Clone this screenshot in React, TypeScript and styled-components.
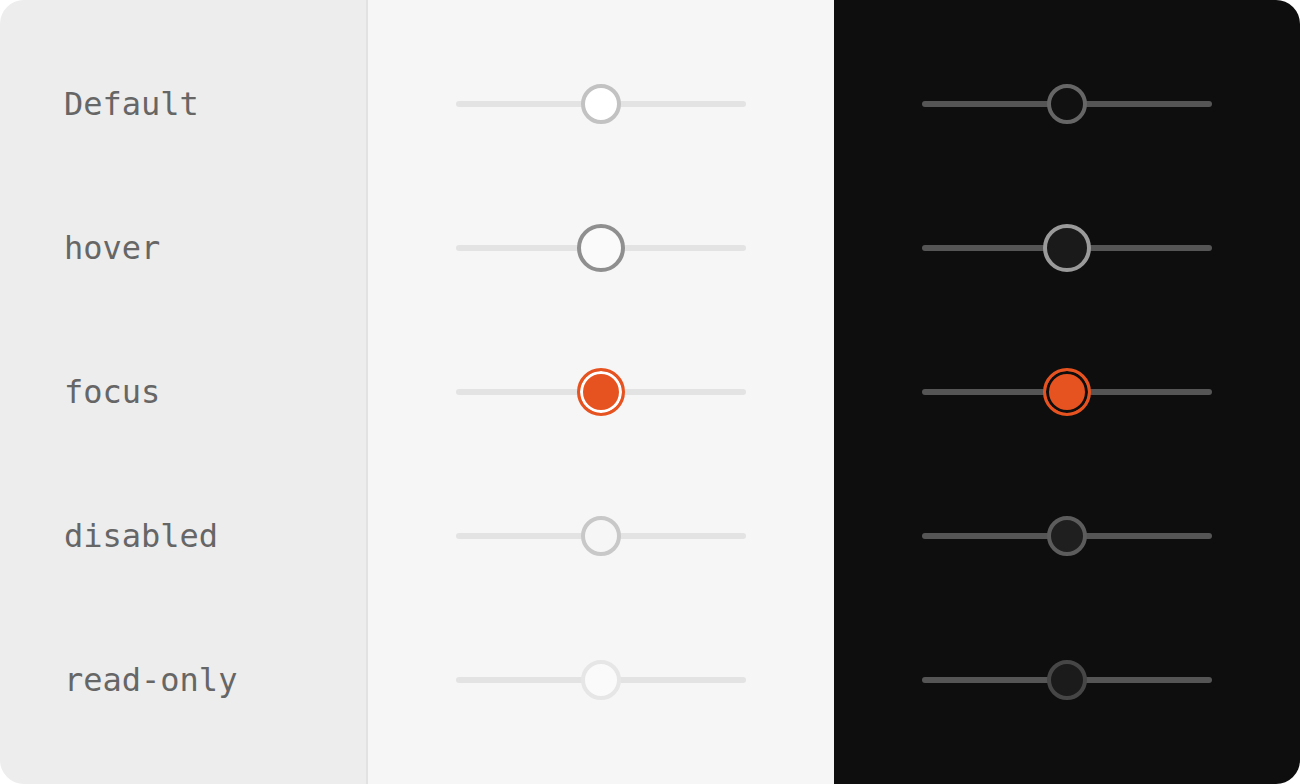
import styled, { createGlobalStyle, css } from "styled-components";

const GlobalStyle = createGlobalStyle`
  html, body {
    margin: 0;
    padding: 0;
    background: #ffffff;
  }
`;

type Mode = "light" | "dark";
type State = "default" | "hover" | "focus" | "disabled" | "readonly";

const states: { key: State; label: string }[] = [
  { key: "default", label: "Default" },
  { key: "hover", label: "hover" },
  { key: "focus", label: "focus" },
  { key: "disabled", label: "disabled" },
  { key: "readonly", label: "read-only" },
];

const ORANGE = "#e75320";

const palette = {
  light: {
    bg: "#f6f6f6",
    track: "#e3e3e3",
    default: { border: "#c2c2c2", fill: "#ffffff" },
    hover: { border: "#8f8f8f", fill: "#fafafa" },
    disabled: { border: "#c8c8c8", fill: "#f6f6f6" },
    readonly: { border: "#e6e6e6", fill: "#fafafa" },
  },
  dark: {
    bg: "#0e0e0e",
    track: "#555555",
    default: { border: "#666666", fill: "#111111" },
    hover: { border: "#9a9a9a", fill: "#1a1a1a" },
    disabled: { border: "#5c5c5c", fill: "#1f1f1f" },
    readonly: { border: "#464646", fill: "#1b1b1b" },
  },
};

const Card = styled.div`
  width: 1300px;
  height: 784px;
  border-radius: 24px;
  overflow: hidden;
  display: grid;
  grid-template-columns: 368px 466px 466px;
`;

const Column = styled.div<{ $bg: string; $divider?: boolean }>`
  background: ${(p) => p.$bg};
  display: flex;
  flex-direction: column;
  padding-top: 32px;
  box-sizing: border-box;
  ${(p) =>
    p.$divider &&
    css`
      border-right: 2px solid #e2e2e2;
    `}
`;

const Row = styled.div<{ $center?: boolean }>`
  height: 144px;
  display: flex;
  align-items: center;
  justify-content: ${(p) => (p.$center ? "center" : "flex-start")};
`;

const Label = styled.span`
  padding-left: 64px;
  font-family: "DejaVu Sans Mono", "Liberation Mono", monospace;
  font-size: 32px;
  color: #666666;
  line-height: 1;
`;

const Track = styled.div<{ $color: string }>`
  position: relative;
  width: 290px;
  height: 6px;
  border-radius: 3px;
  background: ${(p) => p.$color};
`;

const Thumb = styled.div<{ $mode: Mode; $state: State }>`
  position: absolute;
  left: 50%;
  top: 50%;
  transform: translate(-50%, -50%);
  box-sizing: border-box;
  border-radius: 50%;
  ${({ $mode, $state }) => {
    const p = palette[$mode];
    if ($state === "focus") {
      return css`
        width: 48px;
        height: 48px;
        border: 3.5px solid ${ORANGE};
        background: ${ORANGE};
        box-shadow: inset 0 0 0 3px ${$mode === "light" ? "#ffffff" : "#0e0e0e"};
      `;
    }
    const c = p[$state];
    const size = $state === "hover" ? 48 : 40;
    return css`
      width: ${size}px;
      height: ${size}px;
      border: 4px solid ${c.border};
      background: ${c.fill};
    `;
  }}
`;

const SliderColumn = ({ mode }: { mode: Mode }) => (
  <Column $bg={palette[mode].bg}>
    {states.map((s) => (
      <Row key={s.key} $center>
        <Track $color={palette[mode].track}>
          <Thumb $mode={mode} $state={s.key} />
        </Track>
      </Row>
    ))}
  </Column>
);

export default function App() {
  return (
    <>
      <GlobalStyle />
      <Card>
        <Column $bg="#ededed" $divider>
          {states.map((s) => (
            <Row key={s.key}>
              <Label>{s.label}</Label>
            </Row>
          ))}
        </Column>
        <SliderColumn mode="light" />
        <SliderColumn mode="dark" />
      </Card>
    </>
  );
}
